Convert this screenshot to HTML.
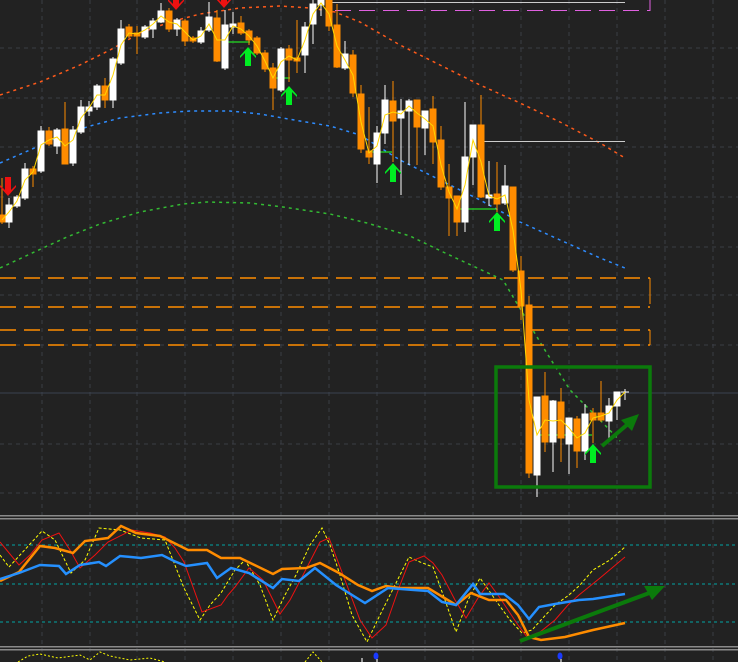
<!DOCTYPE html>
<html><head><meta charset="utf-8"><style>
html,body{margin:0;padding:0;background:#222222;width:738px;height:662px;overflow:hidden}
svg{display:block}
</style></head><body>
<svg width="738" height="662" viewBox="0 0 738 662" xmlns="http://www.w3.org/2000/svg">
<defs>
<path id="up" d="M0 0 L8 9 L8 11 L3 6 L3 19 L-3 19 L-3 6 L-8 11 L-8 9 Z" fill="#00ee22"/>
<path id="dn" d="M0 0 L8 -9 L8 -11 L3 -6 L3 -19 L-3 -19 L-3 -6 L-8 -11 L-8 -9 Z" fill="#ee1111"/>
</defs>
<rect width="738" height="662" fill="#222222"/>
<!-- grid -->
<g stroke="#3a3d44" stroke-width="1" stroke-dasharray="4,4">
<line x1="42" y1="0" x2="42" y2="662"/><line x1="90" y1="0" x2="90" y2="662"/><line x1="137" y1="0" x2="137" y2="662"/><line x1="185" y1="0" x2="185" y2="662"/><line x1="233" y1="0" x2="233" y2="662"/><line x1="281" y1="0" x2="281" y2="662"/><line x1="329" y1="0" x2="329" y2="662"/><line x1="377" y1="0" x2="377" y2="662"/><line x1="425" y1="0" x2="425" y2="662"/><line x1="473" y1="0" x2="473" y2="662"/><line x1="521" y1="0" x2="521" y2="662"/><line x1="569" y1="0" x2="569" y2="662"/><line x1="617" y1="0" x2="617" y2="662"/><line x1="665" y1="0" x2="665" y2="662"/><line x1="713" y1="0" x2="713" y2="662"/>
<line x1="0" y1="48" x2="738" y2="48"/><line x1="0" y1="98" x2="738" y2="98"/><line x1="0" y1="147" x2="738" y2="147"/><line x1="0" y1="197" x2="738" y2="197"/><line x1="0" y1="247" x2="738" y2="247"/><line x1="0" y1="295" x2="738" y2="295"/><line x1="0" y1="345" x2="738" y2="345"/><line x1="0" y1="444" x2="738" y2="444"/><line x1="0" y1="493" x2="738" y2="493"/>
</g>
<line x1="0" y1="393" x2="738" y2="393" stroke="#3a4250" stroke-width="1"/>
<!-- MAs -->
<polyline fill="none" stroke="#ff5a1a" stroke-width="1.5" stroke-dasharray="3,4" points="0,95 40,82 80,65 110,50 140,33 170,22 200,14 240,8 280,6 310,8 335,12 360,22 400,45 440,65 480,85 520,103 560,122 600,143 625,158"/>
<polyline fill="none" stroke="#2e8cff" stroke-width="1.5" stroke-dasharray="3,4" points="0,163 30,150 60,136 90,126 120,118 160,113 190,111 230,111 260,114 300,121 330,126 360,135 400,160 440,180 480,200 520,222 560,240 600,258 625,268"/>
<polyline fill="none" stroke="#33bb33" stroke-width="1.5" stroke-dasharray="3,4" points="0,268 43,248 67,237 100,224 140,212 183,204 207,202 250,203 283,207 330,214 367,223 410,236 443,252 503,280 543,347 570,390 603,423 620,441"/>
<!-- top lines -->
<line x1="330" y1="2.5" x2="625" y2="2.5" stroke="#cccccc" stroke-width="1"/>
<line x1="335" y1="10.5" x2="650" y2="10.5" stroke="#e060e0" stroke-width="1" stroke-dasharray="16,8"/>
<line x1="650" y1="0" x2="650" y2="11" stroke="#e060e0" stroke-width="1"/>
<line x1="483" y1="141.5" x2="625" y2="141.5" stroke="#cccccc" stroke-width="1"/>
<!-- orange dashed levels -->
<g stroke="#ff8c00" stroke-width="1.5" stroke-dasharray="16,8">
<line x1="0" y1="278" x2="650" y2="278"/><line x1="0" y1="307" x2="650" y2="307"/><line x1="0" y1="330" x2="650" y2="330"/><line x1="0" y1="345" x2="650" y2="345"/>
</g>
<g stroke="#ff8c00" stroke-width="1"><line x1="650" y1="278" x2="650" y2="304"/><line x1="650" y1="330" x2="650" y2="345"/></g>
<!-- green short lines -->
<g stroke="#22dd22" stroke-width="1.2">
<line x1="222" y1="42" x2="250" y2="42"/><line x1="270" y1="78" x2="290" y2="78"/><line x1="370" y1="152" x2="392" y2="152"/><line x1="455" y1="209" x2="497" y2="209"/><line x1="535" y1="435" x2="592" y2="435"/>
</g>
<!-- candles -->
<g id="c"></g>
<g stroke-width="1">
<g stroke="#ff8c00" fill="#ff8c00">
<line x1="2" y1="178" x2="2" y2="224"/><rect x="-1" y="215" width="6" height="7"/>
<line x1="33" y1="166" x2="33" y2="187"/><rect x="30" y="169" width="6" height="5"/>
<line x1="49" y1="127" x2="49" y2="146"/><rect x="46" y="131" width="6" height="13"/>
<line x1="65" y1="102" x2="65" y2="164"/><rect x="62" y="129" width="6" height="35"/>
<line x1="105" y1="78" x2="105" y2="108"/><rect x="102" y="86" width="6" height="14"/>
<line x1="129" y1="24" x2="129" y2="38"/><rect x="126" y="27" width="6" height="9"/>
<line x1="137" y1="26" x2="137" y2="54"/><rect x="134" y="33" width="6" height="3"/>
<line x1="169" y1="8" x2="169" y2="32"/><rect x="166" y="11" width="6" height="18"/>
<line x1="185" y1="19" x2="185" y2="46"/><rect x="182" y="21" width="6" height="20"/>
<line x1="193" y1="36" x2="193" y2="43"/><rect x="190" y="38" width="6" height="3"/>
<line x1="217" y1="10" x2="217" y2="62"/><rect x="214" y="18" width="6" height="43"/>
<line x1="241" y1="16" x2="241" y2="35"/><rect x="238" y="23" width="6" height="10"/>
<line x1="249" y1="29" x2="249" y2="45"/><rect x="246" y="31" width="6" height="9"/>
<line x1="257" y1="36" x2="257" y2="55"/><rect x="254" y="38" width="6" height="15"/>
<line x1="265" y1="50" x2="265" y2="72"/><rect x="262" y="53" width="6" height="16"/>
<line x1="273" y1="63" x2="273" y2="110"/><rect x="270" y="68" width="6" height="20"/>
<line x1="289" y1="45" x2="289" y2="82"/><rect x="286" y="49" width="6" height="11"/>
<line x1="297" y1="20" x2="297" y2="73"/><rect x="294" y="58" width="6" height="3"/>
<line x1="329" y1="0" x2="329" y2="31"/><rect x="326" y="0" width="6" height="26"/>
<line x1="337" y1="4" x2="337" y2="68"/><rect x="334" y="25" width="6" height="42"/>
<line x1="353" y1="50" x2="353" y2="97"/><rect x="350" y="55" width="6" height="38"/>
<line x1="361" y1="85" x2="361" y2="153"/><rect x="358" y="94" width="6" height="55"/>
<line x1="369" y1="107" x2="369" y2="164"/><rect x="366" y="151" width="6" height="6"/>
<line x1="393" y1="81" x2="393" y2="162"/><rect x="390" y="101" width="6" height="20"/>
<line x1="417" y1="100" x2="417" y2="165"/><rect x="414" y="100" width="6" height="27"/>
<line x1="433" y1="96" x2="433" y2="164"/><rect x="430" y="109" width="6" height="33"/>
<line x1="441" y1="126" x2="441" y2="190"/><rect x="438" y="140" width="6" height="47"/>
<line x1="449" y1="164" x2="449" y2="236"/><rect x="446" y="187" width="6" height="11"/>
<line x1="457" y1="196" x2="457" y2="236"/><rect x="454" y="196" width="6" height="26"/>
<line x1="481" y1="95" x2="481" y2="198"/><rect x="478" y="125" width="6" height="72"/>
<line x1="497" y1="162" x2="497" y2="212"/><rect x="494" y="194" width="6" height="10"/>
<line x1="513" y1="187" x2="513" y2="272"/><rect x="510" y="187" width="6" height="83"/>
<line x1="521" y1="256" x2="521" y2="320"/><rect x="518" y="271" width="6" height="35"/>
<line x1="529" y1="296" x2="529" y2="478"/><rect x="526" y="305" width="6" height="168"/>
<line x1="545" y1="372" x2="545" y2="452"/><rect x="542" y="396" width="6" height="46"/>
<line x1="561" y1="388" x2="561" y2="462"/><rect x="558" y="402" width="6" height="36"/>
<line x1="577" y1="416" x2="577" y2="468"/><rect x="574" y="419" width="6" height="32"/>
<line x1="593" y1="408" x2="593" y2="443"/><rect x="590" y="413" width="6" height="7"/>
<line x1="601" y1="381" x2="601" y2="422"/><rect x="598" y="413" width="6" height="7"/>
</g>
<g stroke="#ffffff" fill="#ffffff">
<line x1="9" y1="198" x2="9" y2="228"/><rect x="6" y="205" width="6" height="17"/>
<line x1="17" y1="195" x2="17" y2="208"/><rect x="14" y="197" width="6" height="9"/>
<line x1="25" y1="163" x2="25" y2="200"/><rect x="22" y="169" width="6" height="29"/>
<line x1="41" y1="126" x2="41" y2="173"/><rect x="38" y="131" width="6" height="40"/>
<line x1="57" y1="128" x2="57" y2="154"/><rect x="54" y="130" width="6" height="16"/>
<line x1="73" y1="126" x2="73" y2="166"/><rect x="70" y="130" width="6" height="33"/>
<line x1="81" y1="100" x2="81" y2="134"/><rect x="78" y="107" width="6" height="25"/>
<line x1="89" y1="101" x2="89" y2="116"/><rect x="86" y="107" width="6" height="4"/>
<line x1="97" y1="84" x2="97" y2="110"/><rect x="94" y="86" width="6" height="21"/>
<line x1="113" y1="57" x2="113" y2="108"/><rect x="110" y="59" width="6" height="41"/>
<line x1="121" y1="20" x2="121" y2="65"/><rect x="118" y="29" width="6" height="34"/>
<line x1="145" y1="25" x2="145" y2="39"/><rect x="142" y="27" width="6" height="10"/>
<line x1="153" y1="18" x2="153" y2="38"/><rect x="150" y="21" width="6" height="8"/>
<line x1="161" y1="3" x2="161" y2="23"/><rect x="158" y="11" width="6" height="11"/>
<line x1="177" y1="18" x2="177" y2="36"/><rect x="174" y="20" width="6" height="9"/>
<line x1="201" y1="27" x2="201" y2="44"/><rect x="198" y="31" width="6" height="11"/>
<line x1="209" y1="2" x2="209" y2="32"/><rect x="206" y="17" width="6" height="13"/>
<line x1="225" y1="10" x2="225" y2="70"/><rect x="222" y="25" width="6" height="43"/>
<line x1="233" y1="12" x2="233" y2="34"/><rect x="230" y="24" width="6" height="3"/>
<line x1="281" y1="47" x2="281" y2="92"/><rect x="278" y="49" width="6" height="41"/>
<line x1="305" y1="22" x2="305" y2="73"/><rect x="302" y="27" width="6" height="28"/>
<line x1="313" y1="0" x2="313" y2="44"/><rect x="310" y="4" width="6" height="20"/>
<line x1="321" y1="0" x2="321" y2="16"/><rect x="318" y="0" width="6" height="5"/>
<line x1="345" y1="41" x2="345" y2="70"/><rect x="342" y="54" width="6" height="14"/>
<line x1="377" y1="126" x2="377" y2="183"/><rect x="374" y="133" width="6" height="31"/>
<line x1="385" y1="85" x2="385" y2="144"/><rect x="382" y="100" width="6" height="33"/>
<line x1="401" y1="99" x2="401" y2="195"/><rect x="398" y="111" width="6" height="7"/>
<line x1="409" y1="99" x2="409" y2="165"/><rect x="406" y="101" width="6" height="10"/>
<line x1="425" y1="111" x2="425" y2="155"/><rect x="422" y="111" width="6" height="17"/>
<line x1="465" y1="102" x2="465" y2="232"/><rect x="462" y="157" width="6" height="65"/>
<line x1="473" y1="125" x2="473" y2="185"/><rect x="470" y="125" width="6" height="32"/>
<line x1="489" y1="161" x2="489" y2="206"/><rect x="486" y="195" width="6" height="3"/>
<line x1="505" y1="165" x2="505" y2="205"/><rect x="502" y="186" width="6" height="17"/>
<line x1="537" y1="397" x2="537" y2="497"/><rect x="534" y="397" width="6" height="78"/>
<line x1="553" y1="400" x2="553" y2="472"/><rect x="550" y="401" width="6" height="41"/>
<line x1="569" y1="418" x2="569" y2="474"/><rect x="566" y="418" width="6" height="26"/>
<line x1="585" y1="404" x2="585" y2="460"/><rect x="582" y="414" width="6" height="37"/>
<line x1="609" y1="398" x2="609" y2="438"/><rect x="606" y="406" width="6" height="15"/>
<line x1="617" y1="392" x2="617" y2="420"/><rect x="614" y="392" width="6" height="14"/>
<line x1="625" y1="389" x2="625" y2="400"/><line x1="621" y1="392" x2="629" y2="392"/>
</g>
</g>
<!-- close line -->
<polyline fill="none" stroke="#ffd700" stroke-width="1" points="2,220 9,212 17,201 25,180 33,172 41,145 49,140 57,137 65,146 73,140 81,118 89,108 97,95 105,95 113,75 121,45 129,33 137,34 145,30 153,24 161,16 169,22 177,24 185,32 193,40 201,36 209,24 217,40 225,40 233,26 241,29 249,36 257,46 265,61 273,78 281,62 289,56 297,60 305,40 313,14 321,3 329,14 337,46 345,60 353,75 361,122 369,153 377,146 385,115 393,112 401,114 409,106 417,113 425,119 433,126 441,165 449,192 457,209 465,185 473,140 481,162 489,196 497,199 505,195 513,230 521,290 529,400 537,435 545,420 553,421 561,420 569,428 577,438 585,433 593,418 601,416 609,413 617,400 625,392"/>
<!-- arrows -->
<use href="#up" x="248" y="47"/><use href="#up" x="289" y="86"/><use href="#up" x="393" y="163"/><use href="#up" x="497" y="212"/><use href="#up" x="593" y="444"/>
<use href="#dn" x="8" y="196"/><use href="#dn" x="176" y="10"/><use href="#dn" x="224" y="8"/>
<!-- green box -->
<rect x="496" y="367" width="154" height="120" fill="none" stroke="#0b7a0b" stroke-width="3.5"/>
<line x1="602" y1="446" x2="628" y2="424" stroke="#0b7a0b" stroke-width="4"/>
<polygon points="639,414 621,420 632,431" fill="#0b7a0b"/>
<!-- separators -->
<rect x="0" y="515" width="738" height="1.5" fill="#8a8a8a"/><rect x="0" y="518" width="738" height="1.5" fill="#8a8a8a"/>
<rect x="0" y="646" width="738" height="1.5" fill="#8a8a8a"/><rect x="0" y="649" width="738" height="1.5" fill="#8a8a8a"/>
<rect x="0" y="520" width="738" height="126" fill="#232323" opacity="0"/>
<!-- lower panel levels -->
<g stroke="#0a8a8a" stroke-width="1.2" stroke-dasharray="3,3">
<line x1="0" y1="545" x2="738" y2="545"/><line x1="0" y1="584" x2="738" y2="584"/><line x1="0" y1="622" x2="738" y2="622"/>
</g>
<polyline fill="none" stroke="#ffff00" stroke-width="1" stroke-dasharray="3,2" points="0,555 9,567 20,555 42,531 55,540 71,573 85,560 99,528 120,530 141,538 165,540 184,588 200,620 210,605 221,593 235,570 245,560 260,585 273,620 285,595 296,575 310,545 322,528 330,545 339,572 352,615 367,642 380,615 391,593 409,557 420,562 433,567 445,600 456,632 468,600 480,578 490,592 499,605 510,620 522,633 532,630 541,620 555,605 569,595 580,585 593,570 610,560 625,547"/>
<polyline fill="none" stroke="#ee1111" stroke-width="1" points="0,542 19,565 30,555 42,540 59,533 70,550 80,568 95,555 108,542 132,530 150,533 165,537 175,548 184,562 202,612 221,605 228,595 235,587 249,568 263,580 280,614 290,600 301,579 320,542 329,538 348,588 360,620 372,638 386,625 400,585 409,562 424,556 433,563 442,575 455,600 466,618 478,598 489,583 500,598 508,610 518,625 527,637 540,632 555,620 568,605 579,595 600,578 625,557"/>
<polyline fill="none" stroke="#ff8c00" stroke-width="2.5" points="0,581 19,572 40,546 55,548 73,553 85,541 108,538 121,526 136,533 160,536 188,550 207,550 221,558 240,558 273,574 282,569 306,568 320,563 339,573 358,585 372,591 386,586 400,588 428,588 456,605 471,593 489,600 506,600 518,615 529,637 541,640 565,637 593,630 625,623"/>
<polyline fill="none" stroke="#2590ff" stroke-width="2.5" points="0,579 19,573 40,565 59,566 66,574 80,565 99,562 106,566 120,556 141,558 162,555 174,561 186,566 207,563 217,578 231,568 249,573 273,588 282,579 299,581 315,568 336,585 365,603 388,588 414,590 428,591 442,602 456,605 473,584 480,594 504,594 518,605 529,619 539,607 555,604 579,600 593,599 625,594"/>
<line x1="520" y1="641" x2="652" y2="592" stroke="#0b7a0b" stroke-width="4"/>
<polygon points="665,586 644,586 652,600" fill="#0b7a0b"/>
<!-- bottom strip -->
<polyline fill="none" stroke="#ffff00" stroke-width="1" stroke-dasharray="2,2" points="18,662 28,656 40,654 58,658 80,655 90,660 100,652 110,656 130,660 150,658 165,662"/>
<polyline fill="none" stroke="#ffff00" stroke-width="1" stroke-dasharray="2,2" points="305,662 313,652 322,662"/>
<ellipse cx="376" cy="656" rx="2.5" ry="3.5" fill="#1a3aff"/><ellipse cx="560" cy="656" rx="2.5" ry="3.5" fill="#1a3aff"/>
<rect x="376" y="659" width="2" height="3" fill="#999"/><rect x="560" y="659" width="2" height="3" fill="#999"/><rect x="361" y="658" width="2" height="4" fill="#999"/>
</svg>
</body></html>
